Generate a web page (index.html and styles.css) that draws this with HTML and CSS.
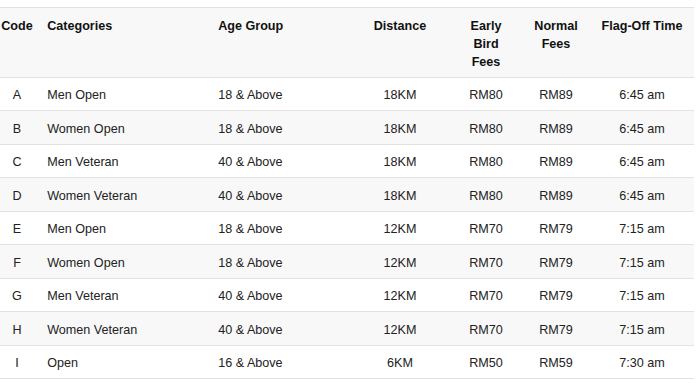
FILE: index.html
```html
<!DOCTYPE html>
<html>
<head>
<meta charset="utf-8">
<link rel="stylesheet" href="styles.css">
</head>
<body>
<table class="race-table">
  <colgroup>
    <col class="c-code"><col class="c-cat"><col class="c-age"><col class="c-dist"><col class="c-early"><col class="c-normal"><col class="c-flag">
  </colgroup>
  <thead>
    <tr>
      <th class="center">Code</th>
      <th>Categories</th>
      <th>Age Group</th>
      <th class="center">Distance</th>
      <th class="center">Early<br>Bird<br>Fees</th>
      <th class="center">Normal<br>Fees</th>
      <th class="center">Flag-Off Time</th>
    </tr>
  </thead>
  <tbody>
    <tr><td class="center">A</td><td>Men Open</td><td>18 &amp; Above</td><td class="center">18KM</td><td class="center">RM80</td><td class="center">RM89</td><td class="center">6:45 am</td></tr>
    <tr><td class="center">B</td><td>Women Open</td><td>18 &amp; Above</td><td class="center">18KM</td><td class="center">RM80</td><td class="center">RM89</td><td class="center">6:45 am</td></tr>
    <tr><td class="center">C</td><td>Men Veteran</td><td>40 &amp; Above</td><td class="center">18KM</td><td class="center">RM80</td><td class="center">RM89</td><td class="center">6:45 am</td></tr>
    <tr><td class="center">D</td><td>Women Veteran</td><td>40 &amp; Above</td><td class="center">18KM</td><td class="center">RM80</td><td class="center">RM89</td><td class="center">6:45 am</td></tr>
    <tr><td class="center">E</td><td>Men Open</td><td>18 &amp; Above</td><td class="center">12KM</td><td class="center">RM70</td><td class="center">RM79</td><td class="center">7:15 am</td></tr>
    <tr><td class="center">F</td><td>Women Open</td><td>18 &amp; Above</td><td class="center">12KM</td><td class="center">RM70</td><td class="center">RM79</td><td class="center">7:15 am</td></tr>
    <tr><td class="center">G</td><td>Men Veteran</td><td>40 &amp; Above</td><td class="center">12KM</td><td class="center">RM70</td><td class="center">RM79</td><td class="center">7:15 am</td></tr>
    <tr><td class="center">H</td><td>Women Veteran</td><td>40 &amp; Above</td><td class="center">12KM</td><td class="center">RM70</td><td class="center">RM79</td><td class="center">7:15 am</td></tr>
    <tr><td class="center">I</td><td>Open</td><td>16 &amp; Above</td><td class="center">6KM</td><td class="center">RM50</td><td class="center">RM59</td><td class="center">7:30 am</td></tr>
  </tbody>
</table>
</body>
</html>
```
FILE: styles.css
```css
html, body {
  margin: 0;
  padding: 0;
  background: #ffffff;
}
body {
  font-family: "Liberation Sans", Arial, Helvetica, sans-serif;
  font-size: 12.6px;
  color: #222222;
  overflow: hidden;
}
.race-table {
  table-layout: fixed;
  width: 700px;
  margin: 7px 0 0 -6px;
  border-collapse: collapse;
  border-top: 1px solid #e2e2e2;
}
.c-code { width: 46px; }
.c-cat { width: 171px; }
.c-age { width: 139px; }
.c-dist { width: 100px; }
.c-early { width: 72px; }
.c-normal { width: 68px; }
.c-flag { width: 104px; }
.race-table th,
.race-table td {
  padding: 8.5px 7.2px 6px;
  line-height: 18px;
  text-align: left;
  vertical-align: top;
  border-bottom: 1px solid #e2e2e2;
}
.race-table th {
  font-weight: bold;
  color: #111111;
}
.race-table .center {
  text-align: center;
}
.race-table thead tr {
  background: #f8f8f8;
}
.race-table tbody tr:nth-child(even) {
  background: #f8f8f8;
}
```
